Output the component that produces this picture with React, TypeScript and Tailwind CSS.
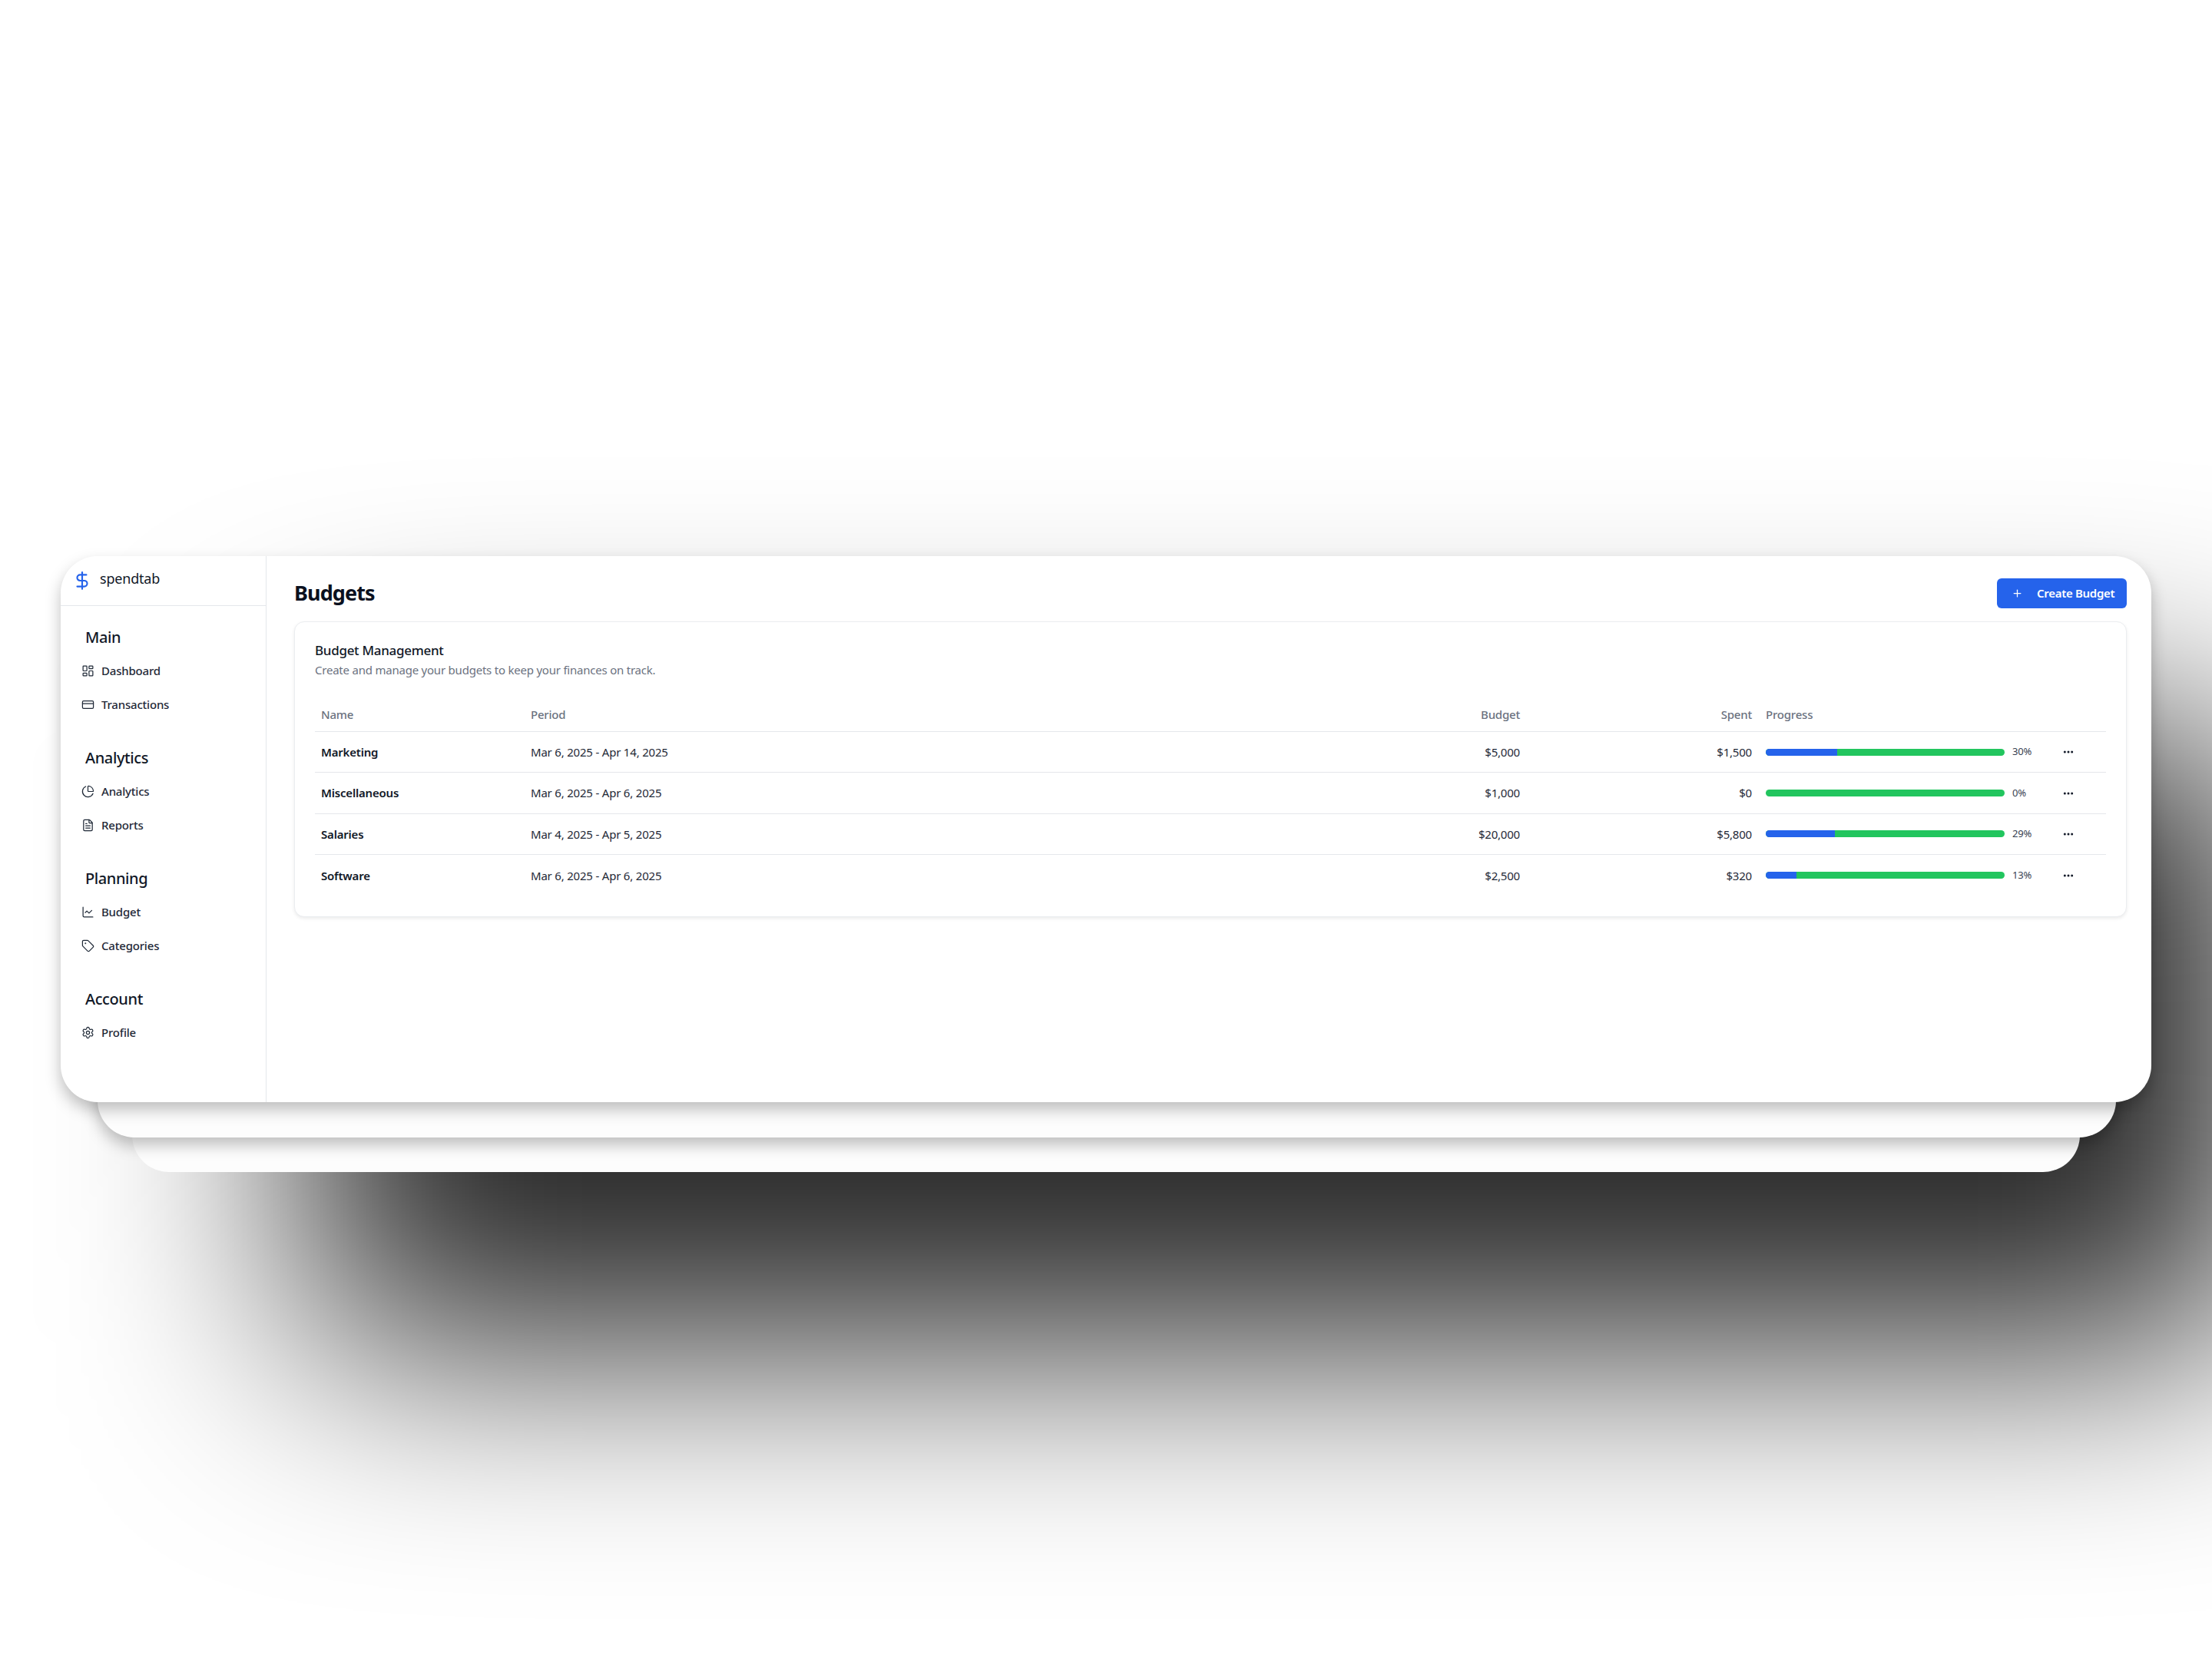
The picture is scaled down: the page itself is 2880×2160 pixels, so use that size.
import {
  ChartLine,
  ChartPie,
  CreditCard,
  DollarSign,
  Ellipsis,
  FileText,
  LayoutDashboard,
  Plus,
  Settings,
  Tag,
} from "lucide-react";

const navSections = [
  {
    title: "Main",
    items: [
      { label: "Dashboard", icon: LayoutDashboard },
      { label: "Transactions", icon: CreditCard },
    ],
  },
  {
    title: "Analytics",
    items: [
      { label: "Analytics", icon: ChartPie },
      { label: "Reports", icon: FileText },
    ],
  },
  {
    title: "Planning",
    items: [
      { label: "Budget", icon: ChartLine },
      { label: "Categories", icon: Tag },
    ],
  },
  {
    title: "Account",
    items: [{ label: "Profile", icon: Settings }],
  },
];

const budgets = [
  { name: "Marketing", period: "Mar 6, 2025 - Apr 14, 2025", budget: "$5,000", spent: "$1,500", pct: 30 },
  { name: "Miscellaneous", period: "Mar 6, 2025 - Apr 6, 2025", budget: "$1,000", spent: "$0", pct: 0 },
  { name: "Salaries", period: "Mar 4, 2025 - Apr 5, 2025", budget: "$20,000", spent: "$5,800", pct: 29 },
  { name: "Software", period: "Mar 6, 2025 - Apr 6, 2025", budget: "$2,500", spent: "$320", pct: 13 },
];

const gridCols = "grid grid-cols-[273px_1fr_200px_302px_373px_79px] items-center";

function Sidebar() {
  return (
    <aside className="w-[268px] shrink-0 border-r border-[#e5e7eb]">
      <div className="flex h-[65px] items-center gap-[10px] border-b border-[#e5e7eb] pl-[15px]">
        <DollarSign className="size-[26px] text-[#2563eb]" strokeWidth={2} />
        <span className="relative -top-[3px] text-[18px] tracking-[-0.2px] text-[#111827]">spendtab</span>
      </div>
      <nav className="pt-[26px]">
        {navSections.map((section) => (
          <div key={section.title} className="mb-[33px]">
            <h2 className="mb-[6px] h-[30px] pl-[32px] text-[20px] leading-[30px] font-medium tracking-[-0.4px] text-[#111827]">
              {section.title}
            </h2>
            {section.items.map(({ label, icon: Icon }) => (
              <div key={label} className="flex h-[44px] items-center gap-[9px] pl-[27px] text-[#1f2937]">
                <Icon className="size-[17px]" strokeWidth={1.75} />
                <span className="text-[15px] font-medium tracking-[-0.2px]">{label}</span>
              </div>
            ))}
          </div>
        ))}
      </nav>
    </aside>
  );
}

function BudgetRow({ row, last }: { row: (typeof budgets)[number]; last: boolean }) {
  return (
    <div className={`${gridCols} h-[53.4px] ${last ? "" : "border-b border-[#e5e7eb]"}`}>
      <div className="pl-[8px] text-[15px] font-semibold tracking-[-0.2px] text-[#111827]">{row.name}</div>
      <div className="pl-[8px] text-[15px] tracking-[-0.2px] text-[#1f2937]">{row.period}</div>
      <div className="pr-[9px] text-right text-[15px] tracking-[-0.2px] text-[#1f2937]">{row.budget}</div>
      <div className="pr-[9px] text-right text-[15px] tracking-[-0.2px] text-[#1f2937]">{row.spent}</div>
      <div className="flex items-center pl-[9px]">
        <div className="h-[9px] w-[311px] overflow-hidden rounded-full bg-[#22c55e]">
          <div className="h-full bg-[#2563eb]" style={{ width: `${row.pct}%` }} />
        </div>
        <span className="ml-[10px] text-[13px] tracking-[-0.2px] text-[#374151]">{row.pct}%</span>
      </div>
      <div className="pl-[22px]">
        <Ellipsis className="size-[16px] text-[#111827]" strokeWidth={2.5} />
      </div>
    </div>
  );
}

function BudgetCard() {
  return (
    <section className="mt-[17px] rounded-[13px] border border-[#ebedf0] bg-white p-[26px] shadow-[0_2px_4px_rgba(0,0,0,0.08)]">
      <h3 className="text-[17px] leading-[22px] font-medium tracking-[-0.3px] text-[#111827]">Budget Management</h3>
      <p className="mt-[4px] text-[15px] leading-[20px] tracking-[-0.22px] text-[#6b7280]">
        Create and manage your budgets to keep your finances on track.
      </p>
      <div className={`${gridCols} mt-[27px] h-[44px] border-b border-[#e5e7eb] text-[15px] font-medium tracking-[-0.2px] text-[#6b7280]`}>
        <div className="pl-[8px]">Name</div>
        <div className="pl-[8px]">Period</div>
        <div className="pr-[9px] text-right">Budget</div>
        <div className="pr-[9px] text-right">Spent</div>
        <div className="pl-[9px]">Progress</div>
        <div />
      </div>
      {budgets.map((row, i) => (
        <BudgetRow key={row.name} row={row} last={i === budgets.length - 1} />
      ))}
    </section>
  );
}

export default function App() {
  return (
    <div className="min-h-[2160px] overflow-hidden bg-white pt-[724px] pl-[79px] font-['Noto_Sans',sans-serif]">
      <div className="relative h-[711px] w-[2722px]">
        <div className="absolute top-[226px] left-[319px] h-[802px] w-[2536px] rounded-[48px] bg-black/85 blur-[150px]" />

        {/* stacked cards behind the window */}
        <div className="absolute top-[92px] right-[93px] left-[93px] h-[710px] rounded-[48px] bg-[#fdfdfd]" />
        <div className="absolute top-[46px] right-[46px] left-[48px] h-[711px] rounded-[48px] bg-[#fdfdfd] shadow-[0_10px_20px_rgba(0,0,0,0.25)]" />

        <div className="relative flex h-full rounded-[48px] bg-white shadow-[0_10px_20px_rgba(0,0,0,0.25)]">
          <Sidebar />
          <main className="flex-1 pt-[29px] pr-[32px] pl-[36px]">
            <header className="flex h-[39px] items-center justify-between">
              <h1 className="text-[27px] font-bold tracking-[-0.9px] text-[#0b1120]">Budgets</h1>
              <button className="flex h-[39px] w-[169px] items-center gap-[18px] rounded-[6px] bg-[#2563eb] pl-[19px] text-[15px] font-semibold tracking-[-0.3px] text-white">
                <Plus className="size-[15px]" strokeWidth={2} />
                Create Budget
              </button>
            </header>
            <BudgetCard />
          </main>
        </div>
      </div>
    </div>
  );
}
